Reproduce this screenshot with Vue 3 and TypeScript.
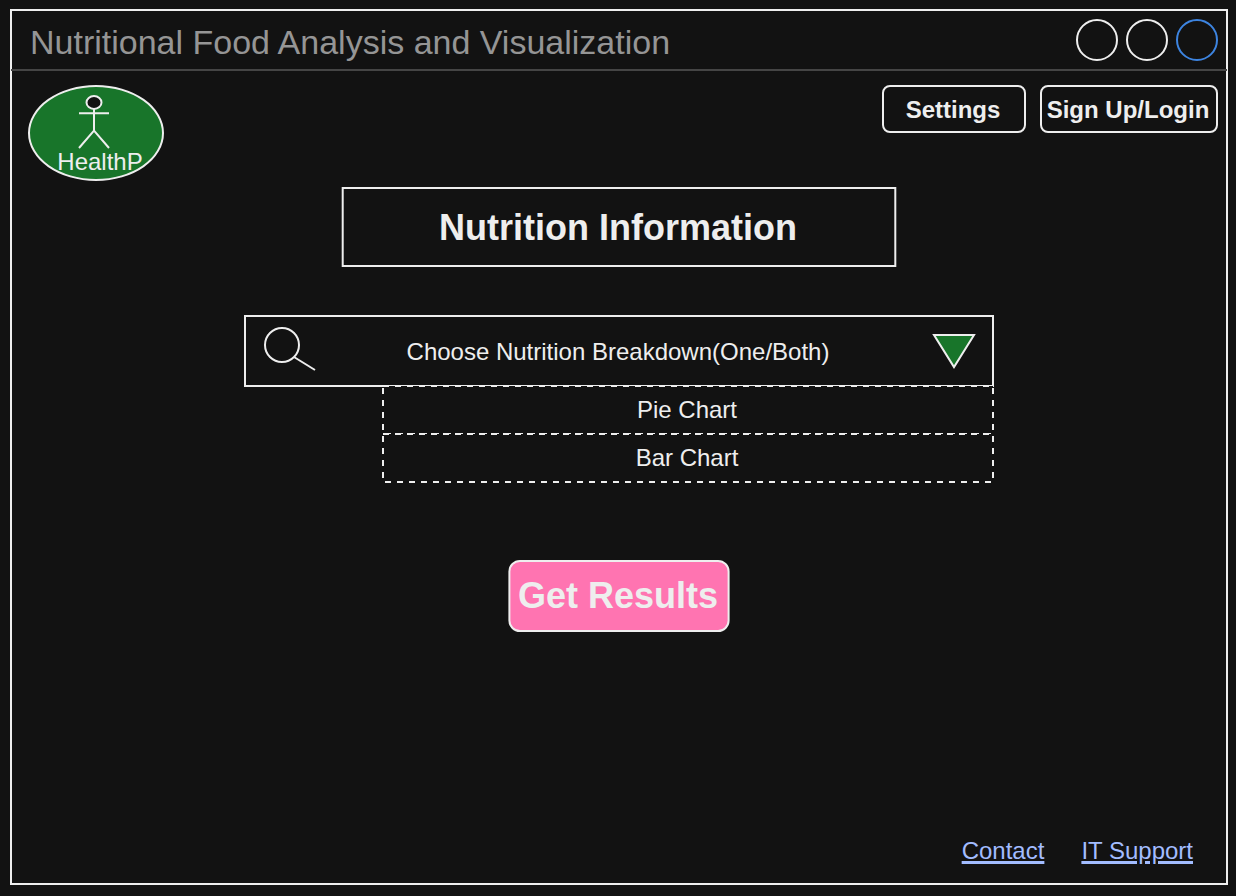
<script setup lang="ts">
interface Option {
  label: string
}
interface Link {
  label: string
  href: string
}

const title: string = 'Nutritional Food Analysis and Visualization'
const controls: string[] = ['plain', 'plain', 'accent']
const options: Option[] = [{ label: 'Pie Chart' }, { label: 'Bar Chart' }]
const links: Link[] = [
  { label: 'Contact', href: '#contact' },
  { label: 'IT Support', href: '#support' },
]
</script>

<template>
  <div class="page">
    <div class="window">
      <header class="titlebar">
        <span class="title">{{ title }}</span>
        <div class="controls">
          <span v-for="(kind, i) in controls" :key="i" class="dot" :class="kind"></span>
        </div>
      </header>

      <div class="toolbar">
        <div class="logo">
          <svg class="person" width="34" height="56" viewBox="-2 -2 34 56">
            <g fill="none" stroke="#eeeeee" stroke-width="2" stroke-miterlimit="10">
              <ellipse cx="15" cy="6.5" rx="7.5" ry="6.5" fill="#121212" />
              <path d="M15 13V34.7M15 17.3H0M15 17.3H30M15 34.7L0 52M15 34.7L30 52" />
            </g>
          </svg>
          <span class="logo-name">HealthP</span>
        </div>
        <div class="actions">
          <button class="btn settings">Settings</button>
          <button class="btn login">Sign Up/Login</button>
        </div>
      </div>

      <main class="content">
        <h1 class="heading">
          <svg class="frame" width="556" height="80" viewBox="0 0 556 80">
            <rect x="1.7" y="1" width="552.6" height="78" fill="none" stroke="#eeeeee" stroke-width="2" />
          </svg>
          <span>Nutrition Information</span>
        </h1>

        <section class="picker">
          <div class="search">
            <svg class="lens" width="56" height="50" viewBox="0 0 56 50">
              <g fill="none" stroke="#eeeeee" stroke-width="2">
                <circle cx="20" cy="20" r="17" />
                <path d="M32 32L53 45" />
              </g>
            </svg>
            <span class="search-label">Choose Nutrition Breakdown(One/Both)</span>
            <svg class="caret" width="46" height="38" viewBox="0 0 46 38">
              <path d="M3 2H43L23 34Z" fill="#18752a" stroke="#eeeeee" stroke-width="2" stroke-miterlimit="10" />
            </svg>
          </div>
          <ul class="options">
            <li v-for="option in options" :key="option.label" class="option">
              <svg class="frame dashed" width="612" height="50" viewBox="0 0 612 50">
                <rect x="1" y="1" width="610" height="48" fill="#121212" stroke="#eeeeee" stroke-width="2" stroke-dasharray="6 6" />
              </svg>
              <span>{{ option.label }}</span>
            </li>
          </ul>
        </section>

        <button class="results">
          <svg class="frame" width="222" height="72" viewBox="0 0 222 72">
            <rect x="1.4" y="1" width="219.2" height="70" rx="10.5" fill="#ff74b1" stroke="#eeeeee" stroke-width="2" />
          </svg>
          <span>Get Results</span>
        </button>
      </main>

      <footer class="footer">
        <a v-for="link in links" :key="link.label" :href="link.href">{{ link.label }}</a>
      </footer>
    </div>
  </div>
</template>

<style>
body {
  background: #121212;
}
</style>

<style scoped>
.page {
  box-sizing: border-box;
  width: 1236px;
  height: 896px;
  padding: 9px 8px 11px 10px;
  background: #121212;
  color: #eeeeee;
  font-family: "Liberation Sans", Arial, Helvetica, sans-serif;
  font-size: 24px;
  line-height: 28px;
  overflow: hidden;
}
.window {
  box-sizing: border-box;
  width: 1218px;
  height: 876px;
  border: 2px solid #eeeeee;
  display: flex;
  flex-direction: column;
}
.titlebar {
  box-sizing: border-box;
  height: 60px;
  margin: 0 -1px;
  padding: 0 9px 0 19px;
  border-bottom: 2px solid #454545;
  display: flex;
  align-items: center;
  justify-content: space-between;
  flex: none;
}
.title {
  color: #959595;
  font-size: 34px;
  line-height: 40px;
  padding-top: 4px;
  white-space: nowrap;
}
.controls {
  display: flex;
  gap: 8px;
}
.dot {
  box-sizing: border-box;
  width: 42px;
  height: 42px;
  border: 2px solid #eeeeee;
  border-radius: 50%;
}
.dot.accent {
  border-color: #3d84e0;
}
.toolbar {
  display: flex;
  justify-content: space-between;
  align-items: flex-start;
  padding: 14px 8px 0 16px;
  height: 96px;
  flex: none;
}
.logo {
  box-sizing: border-box;
  width: 136px;
  height: 96px;
  border: 2px solid #eeeeee;
  border-radius: 50%;
  background: #18752a;
  display: flex;
  flex-direction: column;
  align-items: center;
  padding: 7px 0 0;
}
.person {
  display: block;
  margin-right: 4px;
  flex: none;
}
.logo-name {
  margin: -2px 0 0 8px;
}
.actions {
  display: flex;
  gap: 14px;
}
.btn {
  box-sizing: border-box;
  height: 48px;
  padding: 1px 2px 0 0;
  border: 2px solid #eeeeee;
  border-radius: 8px;
  background: transparent;
  color: inherit;
  font: bold 24px/28px "Liberation Sans", Arial, Helvetica, sans-serif;
  white-space: nowrap;
}
.settings {
  width: 144px;
}
.login {
  width: 178px;
}
.content {
  flex: 1;
  display: flex;
  flex-direction: column;
  align-items: center;
}
.frame {
  position: absolute;
  left: 0;
  top: 0;
}
.heading span,
.option span,
.results span {
  position: relative;
}
.heading {
  box-sizing: border-box;
  position: relative;
  width: 556px;
  height: 80px;
  margin: 6px 0 0;
  padding: 2px 2px 0 0;
  display: flex;
  align-items: center;
  justify-content: center;
  font-size: 36px;
  line-height: 40px;
}
.picker {
  width: 750px;
  margin-top: 48px;
}
.search {
  box-sizing: border-box;
  height: 72px;
  border: 2px solid #eeeeee;
  display: flex;
  align-items: center;
  justify-content: space-between;
  padding: 0 15px 0 16px;
}
.lens {
  margin-top: -2px;
}
.search-label {
  margin: 2px 13px 0 0;
  white-space: nowrap;
}
.caret {
  display: block;
  margin-top: 2px;
}
.options {
  list-style: none;
  margin: -2px 0 0 138px;
  padding: 0;
  width: 612px;
}
.option {
  box-sizing: border-box;
  position: relative;
  height: 48px;
  padding: 2px 2px 0 0;
  display: flex;
  align-items: center;
  justify-content: center;
}
.dashed {
  overflow: visible;
}
.results {
  position: relative;
  width: 222px;
  height: 72px;
  margin-top: 79px;
  padding: 0 2px 0 0;
  border: 0;
  background: none;
  color: inherit;
  font: bold 36px/40px "Liberation Sans", Arial, Helvetica, sans-serif;
  white-space: nowrap;
}
.footer {
  display: flex;
  justify-content: flex-end;
  gap: 37px;
  padding: 0 33px 18px 0;
}
.footer a {
  color: #a2bcff;
  text-decoration: underline;
  text-decoration-thickness: 3px;
  text-underline-offset: 2px;
}
</style>
